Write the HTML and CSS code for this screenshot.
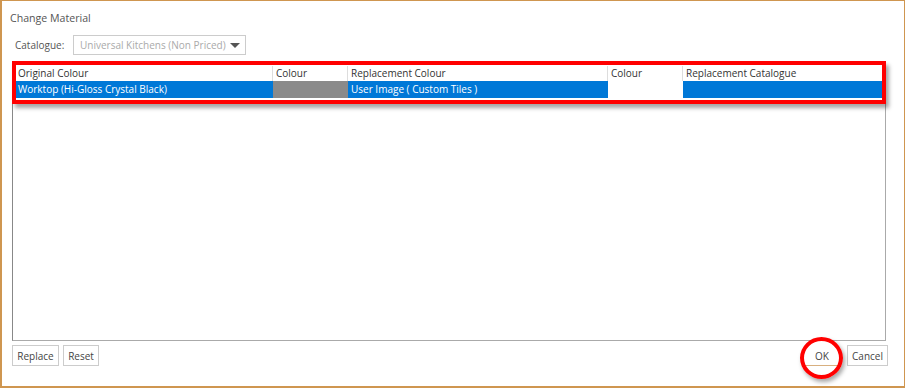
FILE: index.html
```html
<!DOCTYPE html>
<html lang="en">
<head>
    <meta charset="UTF-8">
    <title>Change Material</title>
    <link rel="stylesheet" href="styles.css">
</head>
<body>
    <div class="dialog">
        <div class="title">Change Material</div>

        <div class="catalogue-row">
            <label>Catalogue:</label>
            <div class="select">
                <span>Universal Kitchens (Non Priced)</span>
                <span class="arrow"></span>
            </div>
        </div>

        <div class="grid">
            <div class="grid-inner">
                <div class="row head">
                    <div class="cell c1">Original Colour</div>
                    <div class="cell c2">Colour</div>
                    <div class="cell c3">Replacement Colour</div>
                    <div class="cell c4">Colour</div>
                    <div class="cell c5">Replacement Catalogue</div>
                </div>
                <div class="row selected">
                    <div class="cell c1">Worktop (Hi-Gloss Crystal Black)</div>
                    <div class="cell c2 swatch"></div>
                    <div class="cell c3">User Image ( Custom Tiles )</div>
                    <div class="cell c4 blank"></div>
                    <div class="cell c5"></div>
                </div>
            </div>
            <!-- annotation box drawn over the first rows -->
            <div class="highlight"></div>
        </div>

        <div class="footer">
            <div class="left">
                <button class="replace">Replace</button>
                <button class="reset">Reset</button>
            </div>
            <div class="right">
                <button class="ok">OK<span class="ring"></span></button>
                <button class="cancel">Cancel</button>
            </div>
        </div>
    </div>
</body>
</html>
```

FILE: styles.css
```css
html, body {
    margin: 0;
    padding: 0;
    background: white;
}

body {
    font-family: 'Open Sans', 'Liberation Sans', sans-serif;
    font-size: 10px;
    color: #444;
}

.dialog {
    box-sizing: border-box;
    width: 905px;
    height: 388px;
    border: 1px solid #cf9650;
    border-left-width: 2px;
    border-bottom-width: 2px;
    padding: 9px 16px 0 8px;
    display: flex;
    flex-direction: column;
}

.title {
    font-size: 10.6px;
    color: #555;
    line-height: 16px;
}

.catalogue-row {
    display: flex;
    align-items: center;
    margin-top: 9px;
    padding-left: 5px;
    gap: 10px;
}

.catalogue-row label {
    color: #555;
    width: 48px;
}

.select {
    box-sizing: border-box;
    width: 173px;
    height: 20px;
    border: 1px solid #ccc;
    display: flex;
    align-items: center;
    justify-content: space-between;
    padding: 0 5px 0 6px;
    color: #aaa;
    white-space: nowrap;
}

.select .arrow {
    width: 0;
    height: 0;
    border-left: 5px solid transparent;
    border-right: 5px solid transparent;
    border-top: 5px solid #555;
}

.grid {
    position: relative;
    margin-top: 7px;
    margin-left: 2px;
    margin-right: 2px;
    height: 279px;
    box-sizing: border-box;
    border: 1px solid #aaa;
    border-left-color: #888;
    padding: 3px 2px 0 2px;
}

.row {
    display: flex;
    height: 16px;
    line-height: 16px;
}

.row.head {
    height: 15px;
    line-height: 15px;
    color: #333;
}

.cell {
    box-sizing: border-box;
    padding-left: 3px;
    white-space: nowrap;
    overflow: hidden;
}

.head .cell {
    border-right: 1px solid #ddd;
}

.c1 { width: 258px; }
.c2 { width: 75px; }
.c3 { width: 260px; }
.c4 { width: 75px; }
.c5 { width: 200px; }

.row.selected {
    height: 17px;
    line-height: 17px;
    color: white;
}

.selected .cell {
    background: #0078d7;
}

.selected .swatch {
    background: #8a8a8a;
}

.selected .blank {
    background: white;
}

.highlight {
    position: absolute;
    left: -1px;
    top: -2px;
    width: 866px;
    height: 35px;
    border: 4px solid #f00;
    box-shadow: 3px 4px 4px rgba(0, 0, 0, 0.35);
}

.footer {
    display: flex;
    justify-content: space-between;
    margin-top: 4px;
    padding-left: 2px;
}

.footer .left,
.footer .right {
    display: flex;
    gap: 4px;
}

.footer .right {
    gap: 8px;
}

button {
    font-family: inherit;
    font-size: 10px;
    color: #444;
    background: white;
    border: 1px solid #ccc;
    height: 21px;
    padding: 0;
    margin: 0;
}

.replace { width: 47px; }
.reset { width: 36px; }
.cancel { width: 41px; }

button.ok {
    position: relative;
    width: 34px;
    border-color: transparent;
    border-bottom-color: #d8b080;
}

.ring {
    position: absolute;
    left: -6px;
    top: -9px;
    width: 35px;
    height: 34px;
    border: 4px solid #f00;
    border-radius: 50%;
    box-shadow: 2px 3px 4px rgba(0, 0, 0, 0.35);
}
```
